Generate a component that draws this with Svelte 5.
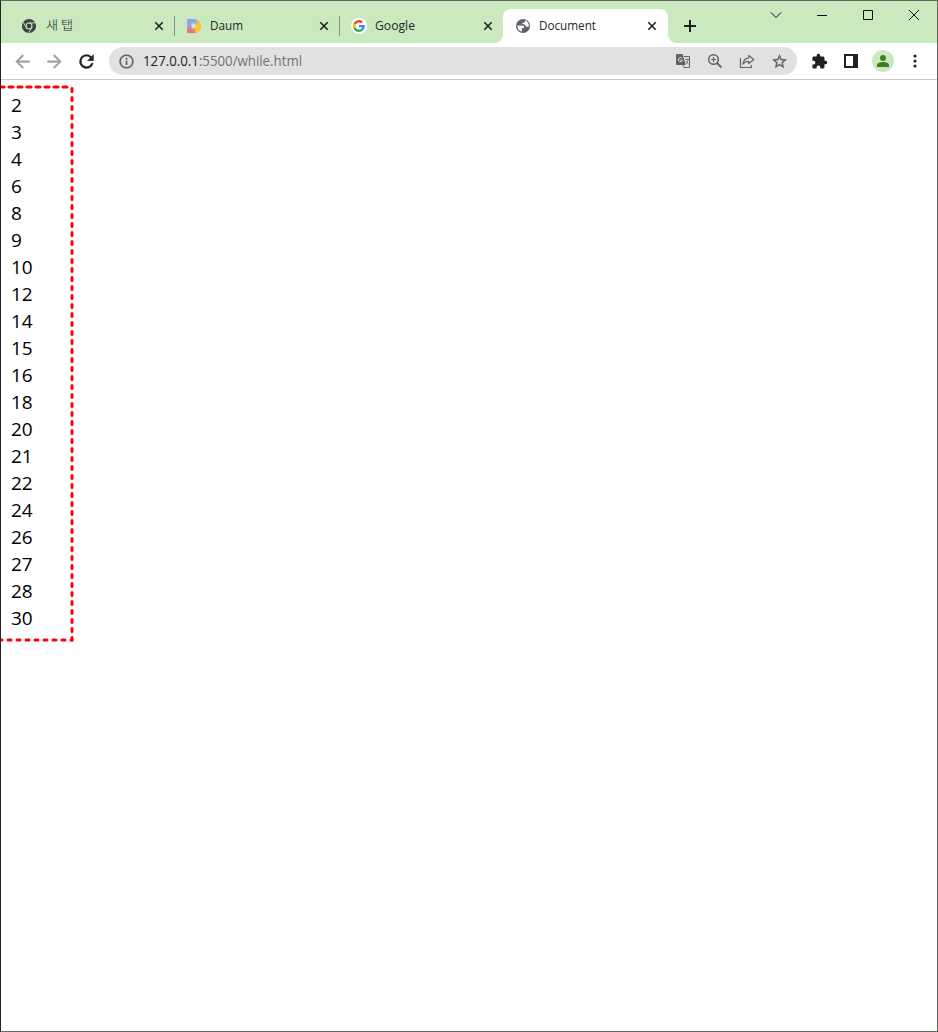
<script lang="ts">
    const tabs = [
        { title: '새 탭', icon: 'chrome', width: 27 },
        { title: 'Daum', icon: 'daum', width: 33 },
        { title: 'Google', icon: 'google', width: 40 },
        { title: 'Document', icon: 'globe', width: 57 },
    ]
    const active = 3

    const numbers = [2, 3, 4, 6, 8, 9, 10, 12, 14, 15, 16, 18, 20, 21, 22, 24, 26, 27, 28, 30]
</script>

<div class="window">
    <header>
        <div class="tabs">
            {#each tabs as tab, i}
                <div class="tab" class:active={i === active} class:line={i < active - 1}>
                    <span class="favicon">
                        {#if tab.icon === 'chrome'}
                            <svg viewBox="0 0 16 16" width="16" height="16">
                                <circle cx="8" cy="8" r="7.1" fill="#3f4445" />
                                <circle cx="8" cy="8" r="3.5" fill="#cae9be" />
                                <circle cx="8" cy="8" r="2.4" fill="#3f4445" />
                                <path d="M8 4.9H14.4M5.3 9.5L2.2 4.2M10.7 9.5L7.6 14.8" stroke="#cae9be" stroke-width=".9" fill="none" />
                            </svg>
                        {:else if tab.icon === 'daum'}
                            <svg viewBox="0 0 16 16" width="16" height="16">
                                <defs>
                                    <linearGradient id="top" x1="0" y1="0" x2="1" y2=".6">
                                        <stop offset="0" stop-color="#72a4fb" />
                                        <stop offset=".45" stop-color="#98a8dd" />
                                        <stop offset=".85" stop-color="#fed02c" />
                                    </linearGradient>
                                    <linearGradient id="bottom" x1="0" y1="0" x2="0" y2="1">
                                        <stop offset=".35" stop-color="#ff6679" stop-opacity="0" />
                                        <stop offset="1" stop-color="#ff6066" />
                                    </linearGradient>
                                </defs>
                                <path d="M1.2 1H7.5C12 1 15 3.8 15 8s-3 7-7.5 7H1.2zM5.5 5.5v5h1.8c1.7 0 2.7-1 2.7-2.5S9 5.5 7.3 5.5z" fill="url(#top)" fill-rule="evenodd" />
                                <path d="M1.2 1H7.5C12 1 15 3.8 15 8s-3 7-7.5 7H1.2zM5.5 5.5v5h1.8c1.7 0 2.7-1 2.7-2.5S9 5.5 7.3 5.5z" fill="url(#bottom)" fill-rule="evenodd" />
                                <path d="M13.9 4.3C16 8 15 13 9.5 14.8L8.7 10.5c1.3-.5 1.8-2.2 1.2-3.7z" fill="#fdca24" />
                            </svg>
                        {:else if tab.icon === 'google'}
                            <svg viewBox="0 0 16 16" width="16" height="16">
                                <circle cx="8" cy="8" r="8" fill="#fff" />
                                <g transform="translate(2 2) scale(.25)">
                                    <path fill="#ea4335" d="M24 9.5c3.54 0 6.71 1.22 9.21 3.6l6.85-6.85C35.9 2.38 30.47 0 24 0 14.62 0 6.51 5.38 2.56 13.22l7.98 6.19C12.43 13.72 17.74 9.5 24 9.5z" />
                                    <path fill="#4285f4" d="M46.98 24.55c0-1.57-.15-3.09-.38-4.55H24v9.02h12.94c-.58 2.96-2.26 5.48-4.78 7.18l7.73 6c4.51-4.18 7.09-10.36 7.09-17.65z" />
                                    <path fill="#fbbc05" d="M10.53 28.59c-.48-1.45-.76-2.99-.76-4.59s.27-3.14.76-4.59l-7.98-6.19C.92 16.46 0 20.12 0 24c0 3.88.92 7.54 2.56 10.78z" />
                                    <path fill="#34a853" d="M24 48c6.48 0 11.93-2.13 15.89-5.81l-7.73-6c-2.15 1.45-4.92 2.3-8.16 2.3-6.26 0-11.57-4.22-13.47-9.91l-7.98 6.19C6.51 42.62 14.62 48 24 48z" />
                                </g>
                            </svg>
                        {:else}
                            <svg viewBox="0 0 16 16" width="16" height="16">
                                <circle cx="8" cy="8" r="7" fill="#5f6368" />
                                <path d="M2.3 7.5h4.4c1.8 0 2.4.8 2.4 2v.6H6.9v3.5C4.2 13.1 2.3 11 2.3 7.5z" fill="#fff" />
                                <path d="M10 2.3v1.2c0 .8-.5 1.2-1.2 1.2H7.4v1.5c1.6 0 2.6.3 3 1.3.3.8.9 1.3 1.7 1.3h1.7C14.1 5.5 12.3 3 10 2.3z" fill="#fff" />
                            </svg>
                        {/if}
                    </span>
                    <svg class="title" class:korean={i === 0} height="20">
                        <text x={i === 0 ? 1 : 0} y="14" textLength={tab.width} lengthAdjust="spacingAndGlyphs">{tab.title}</text>
                    </svg>
                    <svg class="close" viewBox="0 0 10 10" width="10" height="10">
                        <path d="M1.3 1.3l7.4 7.4M8.7 1.3L1.3 8.7" />
                    </svg>
                </div>
            {/each}
        </div>
        <svg class="plus" viewBox="0 0 12 12" width="12" height="12"><path d="M0 6h12M6 0v12" /></svg>
        <div class="controls">
            <svg viewBox="0 0 12 12" width="12" height="12"><path d="M1 3.5l5 5 5-5" /></svg>
            <svg viewBox="0 0 12 12" width="12" height="12"><path d="M1 6.5h10" /></svg>
            <svg viewBox="0 0 12 12" width="12" height="12"><path d="M1.5 1.5h9v9h-9z" /></svg>
            <svg viewBox="0 0 12 12" width="12" height="12"><path d="M1 1l10 10M11 1L1 11" /></svg>
        </div>
    </header>

    <nav>
        <svg class="nav-icon muted" viewBox="0 0 24 24" width="21" height="21"><path d="M20 11H7.83l5.59-5.59L12 4l-8 8 8 8 1.41-1.41L7.83 13H20z" /></svg>
        <svg class="nav-icon muted" viewBox="0 0 24 24" width="21" height="21"><path d="M12 4l-1.41 1.41L16.17 11H4v2h12.17l-5.58 5.59L12 20l8-8z" /></svg>
        <svg class="nav-icon reload" viewBox="0 0 24 24" width="21" height="21"><path d="M17.65 6.35A7.96 7.96 0 0 0 12 4a8 8 0 1 0 7.73 10h-2.3A5.8 5.8 0 1 1 12 6.1c1.66 0 3.14.69 4.22 1.78L13 11h7V4z" /></svg>
        <div class="address">
            <svg class="info" viewBox="0 0 24 24" width="17" height="17"><path d="M11 17h2v-6h-2zm1-15a10 10 0 1 0 0 20 10 10 0 0 0 0-20zm0 18a8 8 0 1 1 0-16 8 8 0 0 1 0 16zM11 9h2V7h-2z" /></svg>
            <svg class="url" width="190" height="22">
                <text x="0" y="16" textLength="159" lengthAdjust="spacingAndGlyphs"><tspan class="host">127.0.0.1</tspan>:5500/while.html</text>
            </svg>
            <div class="actions">
                <svg viewBox="0 0 16 16" width="16" height="16">
                    <path d="M2 1h5.5l3.3 11H2a1 1 0 0 1-1-1V2a1 1 0 0 1 1-1z" />
                    <path d="M9 3.5h5.5v11H9l-1-2.3" fill="none" stroke="#5f6368" />
                    <path d="M10 6.5h4M12 5.5v1M13.3 6.7c-.4 1.7-1.3 3-2.5 4M10.8 8c.6 1.3 1.5 2.2 2.7 3" fill="none" stroke="#5f6368" stroke-width=".8" />
                    <path d="M7 5.3a2 2 0 1 0 .4 1.9H5.5" fill="none" stroke="#e1e1e1" stroke-width="1" />
                </svg>
                <svg viewBox="0 0 16 16" width="16" height="16">
                    <g fill="none" stroke="#5f6368" stroke-width="1.5">
                        <circle cx="6.5" cy="6.5" r="4.8" />
                        <path d="M10 10l4.3 4.3" stroke-width="1.9" />
                        <path d="M4.1 6.5h4.8M6.5 4.1v4.8" stroke-width="1.2" />
                    </g>
                </svg>
                <svg viewBox="0 0 16 16" width="16" height="16">
                    <g fill="none" stroke="#5f6368" stroke-width="1.2">
                        <path d="M1.5 5v9.5h10.8V12" />
                        <path d="M9.8 2.5L14.8 6.5 9.8 10.6V8.4C7.2 8.3 5.4 9.2 4 11c.4-3.4 2.3-5.7 5.8-6.2z" stroke-linejoin="round" />
                    </g>
                </svg>
                <svg viewBox="0 0 24 24" width="17" height="17"><path d="M22 9.24l-7.19-.62L12 2 9.19 8.63 2 9.24l5.46 4.73L5.82 21 12 17.27 18.18 21l-1.63-7.03zM12 15.4l-3.76 2.27 1-4.28-3.32-2.88 4.38-.38L12 6.1l1.71 4.04 4.38.38-3.32 2.88 1 4.28z" stroke="#5f6368" stroke-width=".5" /></svg>
            </div>
        </div>
        <div class="tools">
            <svg viewBox="0 0 24 24" width="17" height="17"><path d="M20.5 11H19V7a2 2 0 0 0-2-2h-4V3.5a2.5 2.5 0 0 0-5 0V5H4a2 2 0 0 0-2 2v3.8h1.5a2.7 2.7 0 0 1 0 5.4H2V20c0 1.1.9 2 2 2h3.8v-1.5a2.7 2.7 0 0 1 5.4 0V22H17a2 2 0 0 0 2-2v-4h1.5a2.5 2.5 0 0 0 0-5z" /></svg>
            <svg viewBox="0 0 14 14" width="14" height="14"><path d="M0 0h14v14H0zM2 2v10h7V2z" fill-rule="evenodd" /></svg>
            <span class="avatar">
                <svg viewBox="0 0 14 14" width="14" height="14"><path d="M7 1a3 3 0 1 1 0 6 3 3 0 0 1 0-6zM1 13v-2c0-1.8 3-3 6-3s6 1.2 6 3v2z" /></svg>
            </span>
            <svg viewBox="0 0 14 14" width="14" height="14"><circle cx="7" cy="2" r="1.6" /><circle cx="7" cy="7" r="1.6" /><circle cx="7" cy="12" r="1.6" /></svg>
        </div>
    </nav>

    <main>
        <ul>
            {#each numbers as n}
                <li>{n}</li>
            {/each}
        </ul>
        <svg class="outline" width="75" height="562">
            <path d="M0 7H71" stroke-dasharray="4 5" stroke-dashoffset="1" />
            <path d="M71 8.5V560" stroke-dasharray="3 6" />
            <path d="M0 560H71" stroke-dasharray="3 6" stroke-dashoffset="2" />
        </svg>
    </main>
</div>

<style>
    :global(body) {
        background: #fff;
    }

    .window {
        box-sizing: border-box;
        height: 1032px;
        display: flex;
        flex-direction: column;
        border: 1px solid #626762;
        border-left-color: #242424;
        font-family: "Open Sans", "Noto Sans", "Noto Sans CJK KR", sans-serif;
        overflow: hidden;
    }

    svg {
        display: block;
        flex: none;
    }

    header {
        height: 42px;
        flex: none;
        display: flex;
        background: #cae9be;
    }

    .tabs {
        display: flex;
        padding: 8px 0 0 8px;
    }

    .tab {
        box-sizing: border-box;
        width: 165px;
        height: 34px;
        display: flex;
        align-items: center;
        padding-left: 12px;
        position: relative;
    }

    .tab:nth-child(3) {
        width: 164px;
    }

    .tab.line::after {
        content: "";
        position: absolute;
        right: -1px;
        top: 7px;
        width: 1px;
        height: 20px;
        background: #81937b;
    }

    .tab.active {
        background: #fff;
        border-radius: 8px 8px 0 0;
    }

    .tab.active::before,
    .tab.active::after {
        content: "";
        position: absolute;
        bottom: 0;
        width: 8px;
        height: 8px;
    }

    .tab.active::before {
        left: -8px;
        background: radial-gradient(circle at 0 0, transparent 7.5px, #fff 8px);
    }

    .tab.active::after {
        right: -8px;
        background: radial-gradient(circle at 100% 0, transparent 7.5px, #fff 8px);
    }

    .title {
        width: 100px;
        margin-left: 8px;
        font-size: 12px;
        fill: #24282a;
    }

    .title.korean {
        font-family: "Noto Sans CJK KR", sans-serif;
        font-weight: 300;
    }

    .close {
        margin-left: 9px;
        stroke: #202124;
        stroke-width: 1.6;
    }

    .tab:nth-child(n + 3) .close {
        margin-left: 8px;
    }

    .plus {
        margin: 19px 0 0 16px;
        stroke: #202124;
        stroke-width: 2;
    }

    .controls {
        display: flex;
        gap: 34px;
        margin: 8px 17px 0 auto;
        fill: none;
        stroke: #111;
        stroke-width: 1;
    }

    nav {
        box-sizing: border-box;
        height: 37px;
        flex: none;
        display: flex;
        align-items: center;
        padding-left: 11px;
        border-bottom: 1px solid #c9c9c9;
    }

    .nav-icon {
        margin-right: 11px;
        fill: #202124;
    }

    .nav-icon.muted {
        fill: #a0a0a0;
        stroke: #a0a0a0;
        stroke-width: 0.4;
    }

    .nav-icon.reload {
        margin-right: 12px;
        stroke: #202124;
        stroke-width: 0.4;
    }

    .address {
        box-sizing: border-box;
        width: 688px;
        height: 28px;
        display: flex;
        align-items: center;
        padding: 0 9px;
        border-radius: 14px;
        background: #e1e1e1;
        fill: #5f6368;
    }

    .info {
        stroke: #5f6368;
        stroke-width: 0.4;
    }

    .url {
        margin-left: 8px;
        font-size: 14px;
        fill: #707276;
    }

    .host {
        fill: #202124;
    }

    .actions {
        display: flex;
        gap: 16px;
        margin-left: auto;
    }

    .tools {
        display: flex;
        align-items: center;
        margin-left: 14px;
        gap: 16px;
        fill: #202124;
    }

    .avatar {
        width: 22px;
        height: 22px;
        margin: 0 -2px;
        display: grid;
        place-items: center;
        border-radius: 50%;
        background: #cae9be;
        fill: #3e7d25;
    }

    main {
        flex: 1;
        position: relative;
    }

    ul {
        margin: 0;
        padding: 12px 0 0 10px;
        list-style: none;
    }

    li {
        height: 27px;
        line-height: 27px;
        font-size: 19px;
        color: #000;
    }

    .outline {
        position: absolute;
        left: 0;
        top: 0;
        fill: none;
        stroke: #ff0008;
        stroke-width: 3;
        stroke-linecap: round;
    }
</style>
